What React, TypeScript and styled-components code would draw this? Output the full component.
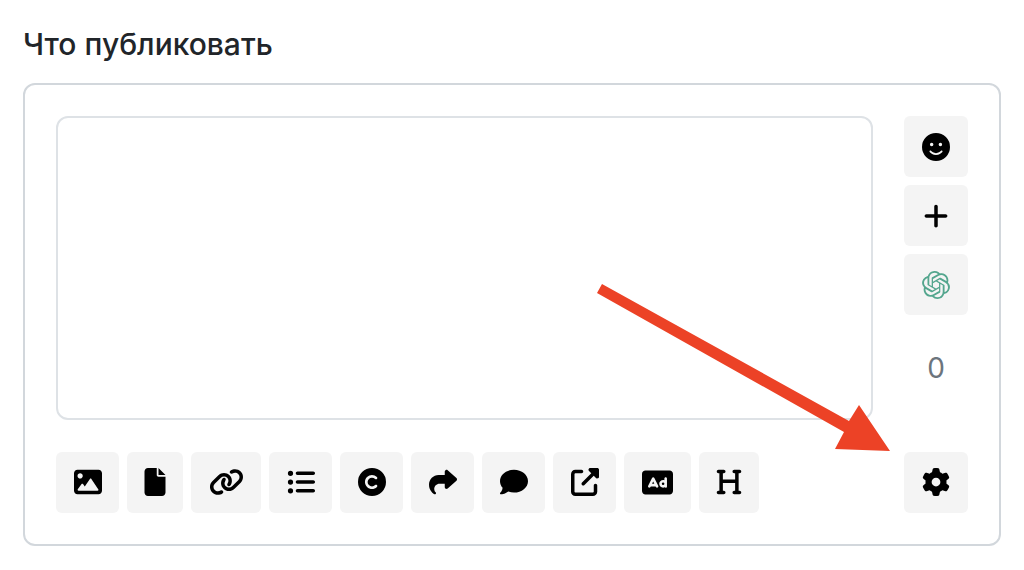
import React from "react";
import styled, { createGlobalStyle } from "styled-components";
import {
  FaFile,
  FaListUl,
  FaCopyright,
  FaShare,
  FaComment,
  FaUpRightFromSquare,
  FaRectangleAd,
  FaHeading,
  FaFaceSmile,
  FaPlus,
  FaGear,
} from "react-icons/fa6";
import { SiOpenai } from "react-icons/si";

const GlobalStyle = createGlobalStyle`
  * { box-sizing: border-box; }
  body {
    margin: 0;
    background: #fff;
    color: #212529;
    font-family: Inter, "Liberation Sans", sans-serif;
  }
`;

const Page = styled.main`
  padding: 24px 23px;
`;

const Title = styled.label`
  display: block;
  margin-bottom: 19px;
  font-size: 30px;
  font-weight: 500;
  line-height: 40px;
`;

const Card = styled.section`
  position: relative;
  display: grid;
  grid-template-columns: 1fr 64px;
  gap: 32px 31px;
  padding: 31px;
  border: 2px solid #d2d7dc;
  border-radius: 12px;
`;

const Editor = styled.textarea`
  display: block;
  width: 100%;
  height: 304px;
  padding: 12px 20px;
  border: 2px solid #dee2e6;
  border-radius: 12px;
  background: #fff;
  color: inherit;
  font: inherit;
  font-size: 28px;
  resize: none;
`;

const BottomTools = styled.div`
  display: flex;
  flex-wrap: wrap;
  gap: 8px;
`;

const ToolButton = styled.button<{ $width?: number; $icon?: number; $color?: string }>`
  display: flex;
  align-items: center;
  justify-content: center;
  width: ${({ $width = 63 }) => $width}px;
  height: 61px;
  padding: 0 0 1px;
  border: 0;
  border-radius: 6px;
  background: #f4f4f4;
  color: ${({ $color = "#000" }) => $color};
  cursor: pointer;

  svg {
    display: block;
    flex: none;
    width: auto;
    height: ${({ $icon = 28 }) => $icon}px;
    fill: currentColor;
  }
`;

const SideTools = styled.div`
  display: flex;
  flex-direction: column;
  gap: 8px;

  ${ToolButton} {
    padding: 0;
  }
`;

const Counter = styled.output`
  margin-top: 24px;
  color: #6c757d;
  font-size: 28px;
  line-height: 42px;
  text-align: center;
`;

const Pointer = styled.svg`
  position: absolute;
  right: 109px;
  bottom: 92px;
  width: 296px;
  height: 170px;
  pointer-events: none;
`;

const ImageIcon = () => (
  <svg viewBox="0 0 512 512" aria-hidden="true">
    <path d="M448 32H64C28.6 32 0 60.6 0 96v320c0 35.4 28.6 64 64 64h384c35.4 0 64-28.6 64-64V96C512 60.6 483.3 32 448 32zM112 96c26.5 0 48 21.5 48 48s-21.5 48-48 48s-48-21.5-48-48S85.5 96 112 96zM446.1 407.6C443.3 412.8 437.9 416 432 416H82c-6 0-11.5-3.4-14.3-8.8c-2.7-5.4-2.2-11.8 1.3-16.7l70-96C142.1 290.4 146.9 288 152 288s9.9 2.4 12.9 6.6l32.5 44.5l93.3-140C293.7 194.7 298.7 192 304 192s10.4 2.7 13.3 7.1l128 192C448.6 396 448.9 402.3 446.1 407.6z" />
  </svg>
);

const LinkIcon = () => (
  <svg viewBox="0 0 640 512" aria-hidden="true">
    <path d="M172.5 131.1C228.1 75.51 320.5 75.51 376.1 131.1C426.1 181.1 433.5 260.8 392.4 318.3L391.3 319.9C381 334.2 361 337.6 346.7 327.3C332.3 317 328.9 297 339.2 282.7L340.3 281.1C363.2 249 359.6 205.1 331.7 177.2C300.3 145.8 249.2 145.8 217.7 177.2L105.5 289.5C73.99 320.1 73.99 372 105.5 403.5C133.3 431.4 177.3 435 209.3 412.1L210.9 410.1C225.3 400.7 245.3 404 255.5 418.4C265.8 432.8 262.5 452.8 248.1 463.1L246.5 464.2C188.1 505.3 110.2 498.7 60.21 448.8C3.741 392.3 3.741 300.7 60.21 244.3L172.5 131.1zM467.5 380C411 436.5 319.5 436.5 263 380C213 330 206.5 251.2 247.6 193.7L248.7 192.1C258.1 177.8 278.1 174.4 293.3 184.7C307.7 194.1 311.1 214.1 300.8 229.3L299.7 230.9C276.8 262.1 280.4 306.9 308.3 334.8C339.7 366.2 390.8 366.2 422.3 334.8L534.5 222.5C566 191 566 139.1 534.5 108.5C506.7 80.63 462.7 76.99 430.7 99.9L429.1 101C414.7 111.3 394.7 107.1 384.5 93.58C374.2 79.2 377.5 59.21 391.9 48.94L393.5 47.82C451 6.731 529.8 13.25 579.8 63.24C636.3 119.7 636.3 211.3 579.8 267.7L467.5 380z" />
  </svg>
);

const tools = [
  { label: "Изображение", Icon: ImageIcon },
  { label: "Файл", Icon: FaFile, width: 56 },
  { label: "Ссылка", Icon: LinkIcon, width: 70 },
  { label: "Список", Icon: FaListUl },
  { label: "Авторство", Icon: FaCopyright },
  { label: "Репост", Icon: FaShare },
  { label: "Комментарий", Icon: FaComment },
  { label: "Внешняя ссылка", Icon: FaUpRightFromSquare },
  { label: "Реклама", Icon: FaRectangleAd, width: 67, icon: 31 },
  { label: "Заголовок", Icon: FaHeading, width: 60 },
];

export default function App() {
  return (
    <Page>
      <GlobalStyle />
      <Title htmlFor="post-text">Что публиковать</Title>
      <Card>
        <Editor id="post-text" />
        <SideTools>
          <ToolButton type="button" aria-label="Эмодзи" $width={64}>
            <FaFaceSmile />
          </ToolButton>
          <ToolButton type="button" aria-label="Добавить" $width={64}>
            <FaPlus />
          </ToolButton>
          <ToolButton type="button" aria-label="ChatGPT" $width={64} $color="#54a68e">
            <SiOpenai />
          </ToolButton>
          <Counter htmlFor="post-text">0</Counter>
        </SideTools>
        <BottomTools>
          {tools.map(({ label, Icon, width, icon }) => (
            <ToolButton key={label} type="button" aria-label={label} $width={width} $icon={icon}>
              <Icon />
            </ToolButton>
          ))}
        </BottomTools>
        <ToolButton type="button" aria-label="Настройки" $width={64}>
          <FaGear />
        </ToolButton>
        <Pointer viewBox="0 0 296 170" aria-hidden="true">
          <path d="M8 2 255 139 265 123 296 169 241 167 250 150 3 11Z" fill="#ec4226" />
        </Pointer>
      </Card>
    </Page>
  );
}
